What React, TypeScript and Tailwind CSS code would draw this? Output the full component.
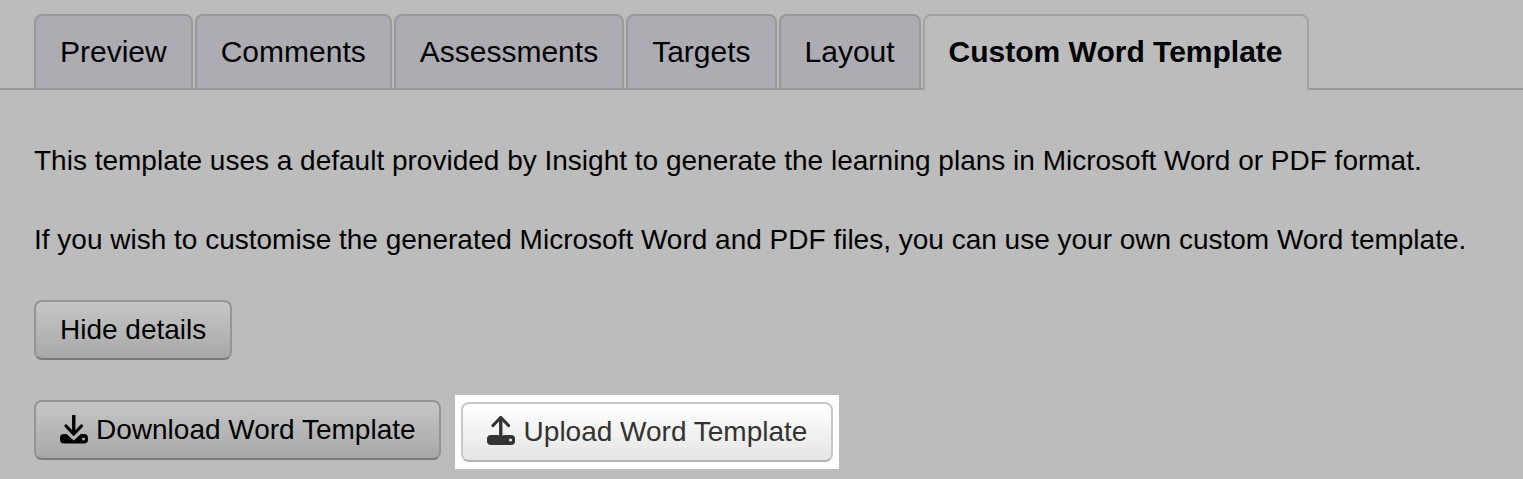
function DownloadIcon() {
  return (
    <svg width="29" height="29" viewBox="0 0 29 29" className="mb-[2px] block shrink-0">
      <rect x="0" y="19" width="28" height="9.5" rx="4" fill="currentColor" />
      <circle cx="23.5" cy="24" r="1.5" fill="#b2b2b2" />
      <path d="M4.5 17L13.75 25.5L23 17Z" fill="#b4b4b4" />
      <path d="M13.75 0V18" stroke="currentColor" strokeWidth="3.4" fill="none" />
      <path d="M6 11L13.75 19L21.5 11" stroke="currentColor" strokeWidth="3.2" fill="none" strokeLinecap="round" />
    </svg>
  );
}

function UploadIcon() {
  return (
    <svg width="29" height="29" viewBox="0 0 29 29" className="mb-[4px] block shrink-0">
      <rect x="0" y="19" width="28" height="10" rx="4" fill="currentColor" />
      <circle cx="23.5" cy="24" r="1.5" fill="#f0f0f0" />
      <path d="M9.5 17.5L13.75 21.5L18 17.5Z" fill="#f3f3f3" />
      <path d="M13.75 2V22" stroke="currentColor" strokeWidth="3.4" fill="none" />
      <path d="M6 9.5L13.75 1.5L21.5 9.5" stroke="currentColor" strokeWidth="3.2" fill="none" strokeLinecap="round" />
    </svg>
  );
}

const tabs = ["Preview", "Comments", "Assessments", "Targets", "Layout"];

export default function App() {
  return (
    <div className="h-[479px] w-[1523px] overflow-hidden bg-[#bcbcbc] pt-[14px] text-black [font-family:'Liberation_Sans',Arial,sans-serif]">
      <div className="flex h-[76px] gap-[2px] border-b-2 border-[#999999] pl-[34px]">
        {tabs.map((t) => (
          <div
            key={t}
            className="flex h-[74px] items-center rounded-t-[8px] border-2 border-b-0 border-[#999999] bg-[#adacb2] px-[24px] pb-[2px] text-[30px]"
          >
            {t}
          </div>
        ))}
        <div className="flex h-[76px] items-center rounded-t-[8px] border-2 border-b-0 border-[#a3a3a3] bg-[#bcbcbc] px-[24px] pb-[4px] text-[30px] font-bold">
          Custom Word Template
        </div>
      </div>
      <div className="pl-[34px]">
        <p className="mt-[53px] text-[28px] leading-[36px]">
          This template uses a default provided by Insight to generate the learning plans in Microsoft Word or PDF format.
        </p>
        <p className="mt-[43px] text-[28px] leading-[36px]">
          If you wish to customise the generated Microsoft Word and PDF files, you can use your own custom Word template.
        </p>
        <button className="mt-[42px] block h-[60px] rounded-[8px] border-2 border-[#959595] border-b-[#7a7a7a] bg-gradient-to-b from-[#c6c6c6] to-[#a8a8a8] px-[24px] text-[28px] text-black">
          Hide details
        </button>
        <div className="mt-[34px] flex items-start">
          <button className="mt-[6px] flex h-[60px] items-center gap-[7px] rounded-[8px] border-2 border-[#959595] border-b-[#7a7a7a] bg-gradient-to-b from-[#c6c6c6] to-[#a8a8a8] pl-[24px] pr-[23px] text-[28px] text-black">
            <DownloadIcon />
            Download Word Template
          </button>
          <div className="ml-[14px] mt-[1px] bg-white px-[6px] py-[7px]">
            <button className="flex h-[60px] items-center gap-[8px] rounded-[8px] border-2 border-[#c8c8c8] border-b-[#b4b4b4] bg-gradient-to-b from-[#ffffff] to-[#e5e5e5] px-[24px] text-[28px] text-[#333333]">
              <UploadIcon />
              Upload Word Template
            </button>
          </div>
        </div>
      </div>
    </div>
  );
}
